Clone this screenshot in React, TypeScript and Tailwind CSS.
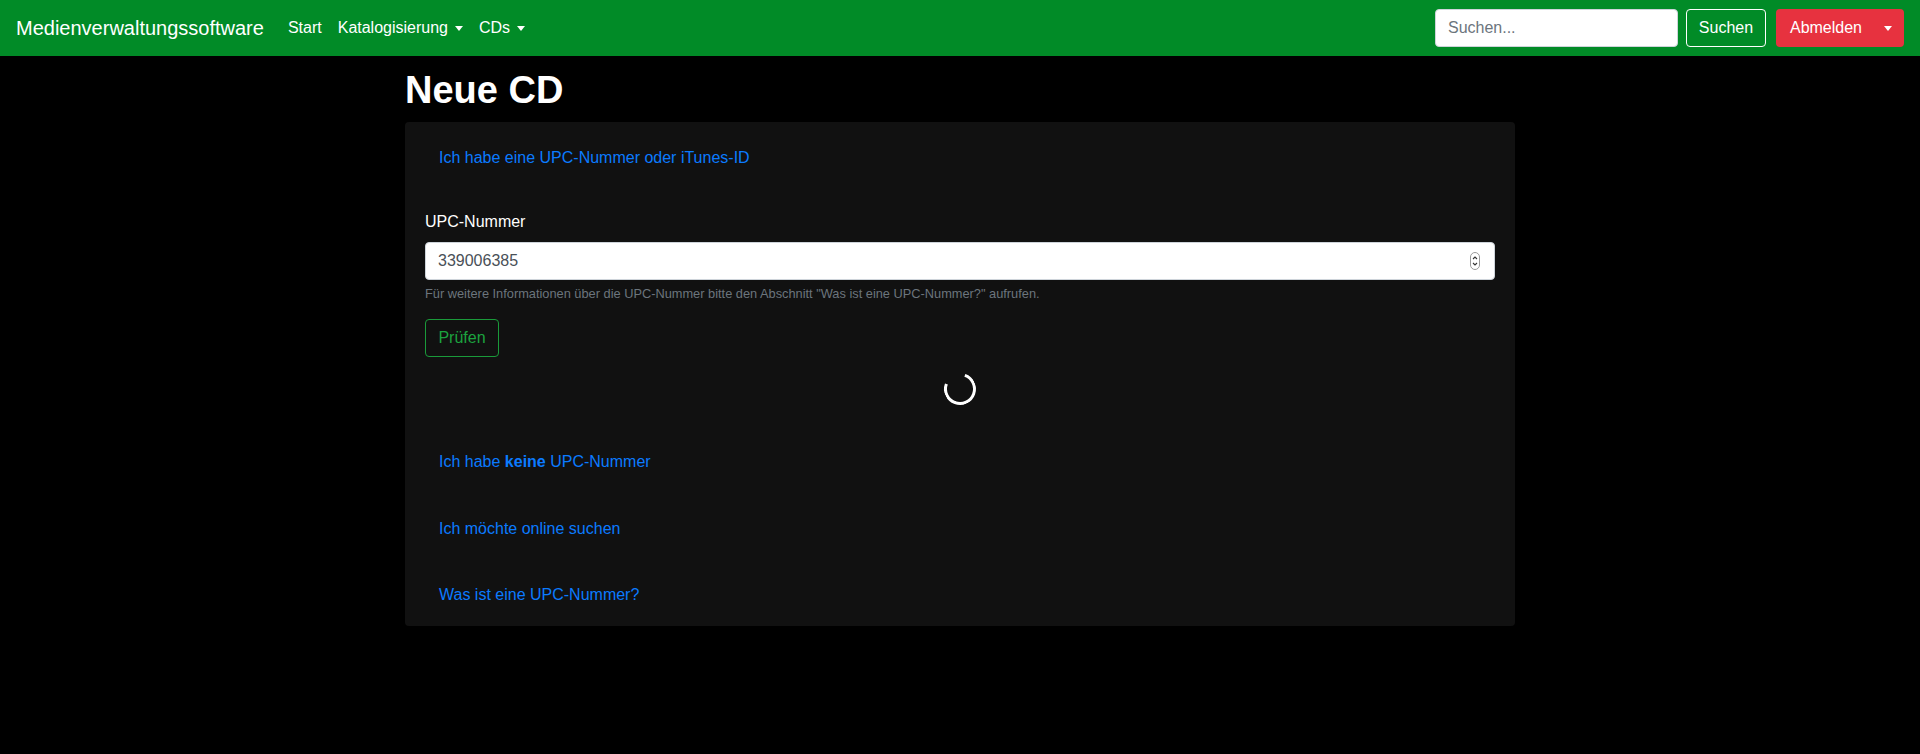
function Caret() {
  return <span className="ml-[7px] inline-block w-0 h-0 align-middle border-x-[4px] border-x-transparent border-t-[5px] border-t-white" />;
}

function HeaderLink({ children, h }: { children: React.ReactNode; h: string }) {
  return (
    <div className={`flex items-center pl-[34px] pt-1 ${h}`}>
      <a href="#" className="text-[16px] text-[#0b7bff] leading-6">
        {children}
      </a>
    </div>
  );
}

export default function App() {
  return (
    <div className="min-h-[754px] bg-black font-['Liberation_Sans',Arial,sans-serif] text-white">
      {/* Top navbar */}
      <nav className="h-[56px] bg-[#018b27] flex items-center justify-between px-4">
        <div className="flex items-center">
          <span className="text-[20px] leading-[30px] mr-4">Medienverwaltungssoftware</span>
          <div className="flex items-center text-[16px]">
            <a href="#" className="px-2">Start</a>
            <a href="#" className="px-2 flex items-center">Katalogisierung<Caret /></a>
            <a href="#" className="px-2 flex items-center">CDs<Caret /></a>
          </div>
        </div>
        <div className="flex items-center">
          <input
            readOnly
            placeholder="Suchen..."
            className="w-[243px] h-[38px] rounded-[4px] bg-white border border-[#ced4da] px-3 text-[16px] text-[#495057] placeholder:text-[#6c757d] outline-none"
          />
          <button className="ml-2 h-[38px] w-[80px] rounded-[4px] border border-white text-[16px] text-white">Suchen</button>
          <div className="ml-[10px] flex h-[38px] rounded-[4px] bg-[#e7323f] overflow-hidden">
            <button className="pl-[14px] pr-[10px] text-[16px] text-white">Abmelden</button>
            <button className="w-[32px] flex items-center justify-center">
              <span className="inline-block w-0 h-0 border-x-[4px] border-x-transparent border-t-[5px] border-t-white" />
            </button>
          </div>
        </div>
      </nav>

      <main className="w-[1110px] mx-auto pt-[10px]">
        <h1 className="text-[38px] leading-[48px] font-bold mb-2">Neue CD</h1>

        <div className="bg-[#111111] rounded-[4px]">
          <HeaderLink h="h-[68px]">Ich habe eine UPC-Nummer oder iTunes-ID</HeaderLink>

          <div className="px-5 pt-5 pb-[21px]">
            <label className="block text-[16px] leading-6 mb-2 text-white">UPC-Nummer</label>
            <div className="relative">
              <input
                readOnly
                value="339006385"
                className="w-full h-[38px] rounded-[4px] bg-white border border-[#ced4da] px-3 text-[16px] text-[#495057] outline-none"
              />
              <svg className="absolute right-[15px] top-[10px]" width="10" height="18" viewBox="0 0 10 18" fill="none">
                <rect x="0.5" y="0.5" width="9" height="17" rx="4.5" stroke="#9a9a9a" />
                <path d="M3 7l2-2 2 2M3 11l2 2 2-2" stroke="#333" strokeWidth="1.1" />
              </svg>
            </div>
            <p className="mt-1 text-[12.8px] leading-[19px] text-[#6c757d]">
              Für weitere Informationen über die UPC-Nummer bitte den Abschnitt "Was ist eine UPC-Nummer?" aufrufen.
            </p>
            <button className="mt-4 h-[38px] w-[74px] rounded-[4px] border border-[#1a9a3a] text-[16px] text-[#1ca33f]">
              Prüfen
            </button>
            <div className="flex justify-center mt-4">
              <div className="w-8 h-8 rounded-full border-[3.5px] border-white border-t-transparent -rotate-[25deg]" />
            </div>
          </div>

          <HeaderLink h="h-[67px]">
            Ich habe <b className="font-bold">keine</b> UPC-Nummer
          </HeaderLink>
          <HeaderLink h="h-[67px]">Ich möchte online suchen</HeaderLink>
          <HeaderLink h="h-[66px]">Was ist eine UPC-Nummer?</HeaderLink>
        </div>
      </main>
    </div>
  );
}
